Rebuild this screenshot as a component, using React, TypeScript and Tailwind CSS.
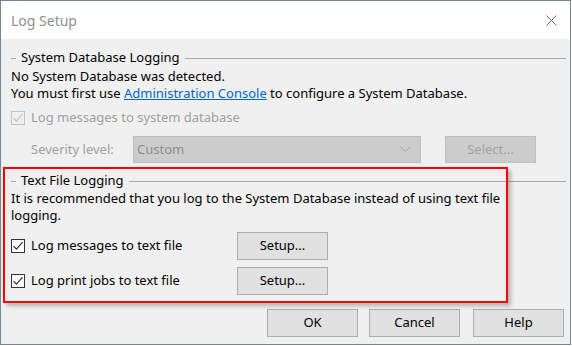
import React from "react";

const font = { fontFamily: '"Noto Sans", "Liberation Sans", sans-serif' };

const CheckBox = ({ disabled = false }: { disabled?: boolean }) => (
  <div
    className={`w-[14px] h-[14px] border flex items-center justify-center shrink-0 ${
      disabled ? "border-[#c4c4c4] bg-[#f0f0f0]" : "border-[#333333] bg-white"
    }`}
  >
    <svg width="12" height="12" viewBox="0 0 12 12">
      <path
        d="M1.5 6.2 L4.5 9.2 L10.5 2.2"
        fill="none"
        stroke={disabled ? "#c4c4c4" : "#333333"}
        strokeWidth="1.2"
      />
    </svg>
  </div>
);

const GroupHeader = ({ label }: { label: string }) => (
  <div className="flex items-center h-[17px] gap-[5px]">
    <div className="w-[5px] h-px bg-[#a8a8a8] mt-[2px]" />
    <span className="leading-[17px]">{label}</span>
    <div className="flex-1 h-px bg-[#a8a8a8] mt-[2px]" />
  </div>
);

const Button = ({ label, disabled = false }: { label: string; disabled?: boolean }) => (
  <div
    className={`w-[91px] h-[28px] border flex items-center justify-center ${
      disabled
        ? "bg-[#cccccc] border-[#bfbfbf] text-[#a3a3a3]"
        : "bg-[#e1e1e1] border-[#adadad] text-black"
    }`}
  >
    {label}
  </div>
);

const App = () => {
  return (
    <div
      className="relative w-[571px] h-[345px] border border-[#7a8591] flex flex-col text-[13px] text-black bg-[#f0f0f0]"
      style={font}
    >
      {/* title bar */}
      <div className="h-[38px] bg-white flex items-center justify-between pl-[10px] pr-[13px]">
        <span className="text-[#8f8f8f] text-[14px]">Log Setup</span>
        <svg width="11" height="11" viewBox="0 0 11 11">
          <path d="M0.5 0.5 L10.5 10.5 M10.5 0.5 L0.5 10.5" stroke="#6a6a6a" strokeWidth="1" />
        </svg>
      </div>

      <div className="flex-1 flex flex-col pl-[10px] pr-[4px] pt-[10px]">
        <GroupHeader label="System Database Logging" />
        <div className="mt-[2px] leading-[17px]">
          <div>No System Database was detected.</div>
          <div>
            You must first use{" "}
            <span className="text-[#0066cc] underline">Administration Console</span> to
            configure a System Database.
          </div>
        </div>

        <div className="mt-[7px] flex items-center gap-[6px] h-[17px] text-[#a0a0a0]">
          <CheckBox disabled />
          <span>Log messages to system database</span>
        </div>

        <div className="mt-[10px] flex items-center h-[27px]">
          <span className="w-[122px] pl-[20px] text-[#a0a0a0]">Severity level:</span>
          <div className="w-[288px] h-[27px] bg-[#cccccc] border border-[#bfbfbf] flex items-center justify-between pl-[3px] pr-[9px] text-[#8c8c8c]">
            <span>Custom</span>
            <svg width="11" height="7" viewBox="0 0 11 7">
              <path d="M0.5 0.5 L5.5 5.5 L10.5 0.5" fill="none" stroke="#a8a8a8" strokeWidth="1" />
            </svg>
          </div>
          <div className="ml-[24px]">
            <div className="w-[91px] h-[27px] border bg-[#cccccc] border-[#bfbfbf] text-[#a3a3a3] flex items-center justify-center">
              Select...
            </div>
          </div>
        </div>

        <div className="mt-[9px]">
          <GroupHeader label="Text File Logging" />
        </div>
        <div className="mt-[1px] leading-[17px] whitespace-nowrap">
          It is recommended that you log to the System Database instead of using text file
          <br />
          logging.
        </div>

        <div className="mt-[8px] flex items-center h-[28px]">
          <div className="w-[226px] flex items-center gap-[6px]">
            <CheckBox />
            <span>Log messages to text file</span>
          </div>
          <Button label="Setup..." />
        </div>
        <div className="mt-[7px] flex items-center h-[28px]">
          <div className="w-[226px] flex items-center gap-[6px]">
            <CheckBox />
            <span>Log print jobs to text file</span>
          </div>
          <Button label="Setup..." />
        </div>

        <div className="mt-[14px] flex justify-end gap-[11px] pr-[2px]">
          <Button label="OK" />
          <Button label="Cancel" />
          <div className="ml-[2px]">
            <Button label="Help" />
          </div>
        </div>
      </div>

      {/* red highlight annotation */}
      <div className="absolute left-[2px] top-[166px] w-[505px] h-[136px] border-[2px] border-[#ff0000] shadow-[3px_3px_4px_rgba(0,0,0,0.25)] pointer-events-none" />
    </div>
  );
};

export default App;
